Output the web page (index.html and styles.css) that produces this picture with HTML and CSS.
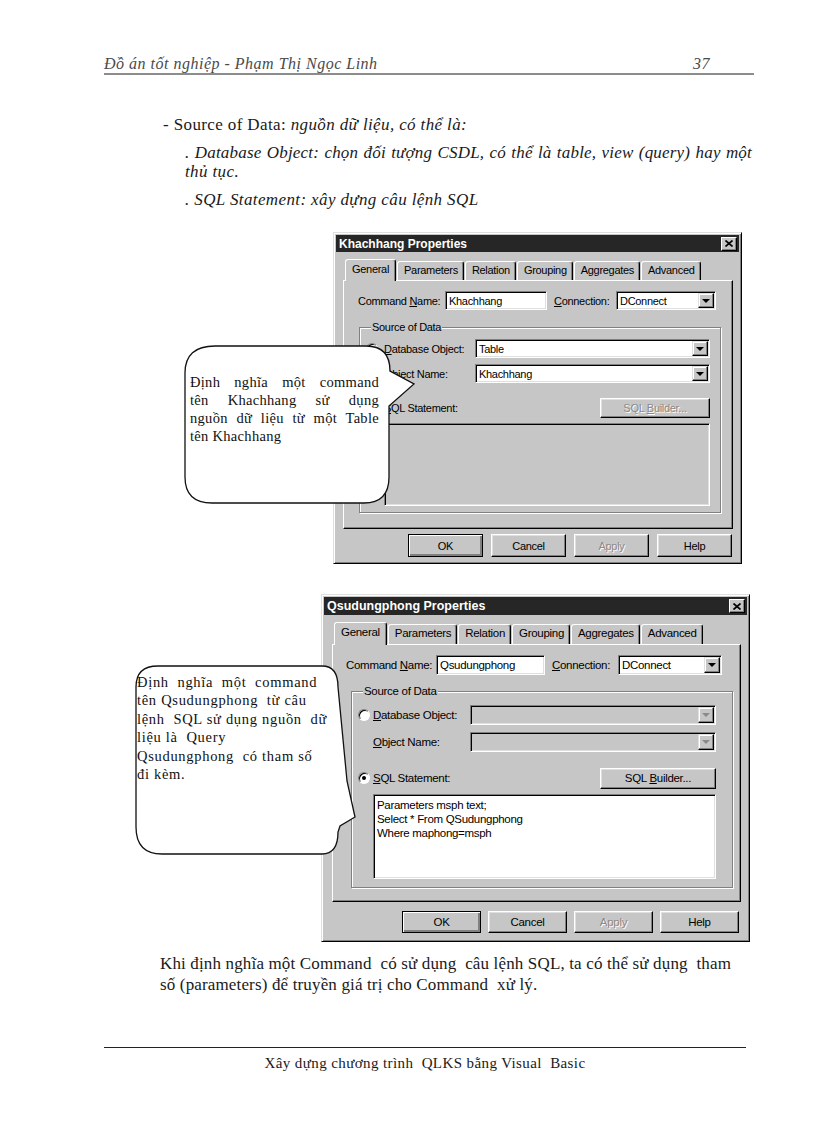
FILE: index.html
```html
<!DOCTYPE html>
<html lang="vi">
<head>
    <meta charset="UTF-8">
    <title>Đồ án tốt nghiệp - trang 37</title>
    <link rel="stylesheet" href="styles.css">
</head>
<body>
<div class="page">
    <div class="header">
        <span>Đồ án tốt nghiệp - Phạm Thị Ngọc Linh</span>
        <span class="page-no">37</span>
    </div>

    <div class="intro">
        <p>- Source of Data: <i>nguồn dữ liệu, có thể là:</i></p>
        <p class="item"><i class="jl">. Database Object: chọn đối tượng CSDL, có thể là table, view (query) hay một</i><i>thủ tục.</i></p>
        <p class="item"><i>. SQL Statement: xây dựng câu lệnh SQL</i></p>
    </div>

    <!-- hình 1: command lấy dữ liệu từ table -->
    <div class="figure fig-kh">
        <div class="win win-kh">
            <div class="titlebar">
                <span>Khachhang Properties</span>
                <span class="close"><svg width="8" height="7" viewBox="0 0 8 7"><path d="M0.5 0.5L7.5 6.5M7.5 0.5L0.5 6.5" stroke="#000" stroke-width="1.7"/></svg></span>
            </div>
            <div class="tabs">
                <span class="tab active">General</span>
                <span class="tab">Parameters</span>
                <span class="tab">Relation</span>
                <span class="tab">Grouping</span>
                <span class="tab">Aggregates</span>
                <span class="tab">Advanced</span>
            </div>
            <div class="panel">
                <div class="row">
                    <span class="lbl lbl-cmd">Command <u>N</u>ame:</span>
                    <span class="field input-cmd">Khachhang</span>
                    <span class="lbl lbl-conn"><u>C</u>onnection:</span>
                    <span class="field combo combo-conn"><span class="val">DConnect</span><span class="drop"></span></span>
                </div>
                <fieldset class="group">
                    <legend>Source of Data</legend>
                    <div class="row">
                        <span class="radio checked"></span>
                        <span class="lbl lbl-src"><u>D</u>atabase Object:</span>
                        <span class="field combo"><span class="val">Table</span><span class="drop"></span></span>
                    </div>
                    <div class="row row-obj">
                        <span class="lbl lbl-src"><u>O</u>bject Name:</span>
                        <span class="field combo"><span class="val">Khachhang</span><span class="drop"></span></span>
                    </div>
                    <div class="row row-sql">
                        <span class="radio"></span>
                        <span class="lbl"><u>S</u>QL Statement:</span>
                        <span class="btn btn-sql disabled"><span>SQL <u>B</u>uilder...</span></span>
                    </div>
                    <div class="field sql-text disabled"></div>
                </fieldset>
            </div>
            <div class="buttons">
                <span class="btn default">OK</span>
                <span class="btn">Cancel</span>
                <span class="btn disabled">Apply</span>
                <span class="btn">Help</span>
            </div>
        </div>

        <div class="callout callout-kh">
            <svg class="bubble" width="232" height="161" viewBox="0 0 232 161">
                <path d="M31 1H182Q206 1 206 26L230 39L205 61V132Q205 158 180 158H28Q1 158 1 132V28Q1 1 31 1Z" fill="#fff" stroke="#111" stroke-width="1.3"/>
            </svg>
            <div class="callout-text">
                <span class="jl">Định nghĩa một command</span>
                <span class="jl">tên Khachhang sử dụng</span>
                <span class="jl">nguồn dữ liệu từ một Table</span>
                <span>tên Khachhang</span>
            </div>
        </div>
    </div>

    <!-- hình 2: command dùng câu lệnh SQL có tham số -->
    <div class="figure fig-qs">
        <div class="win win-qs">
            <div class="titlebar">
                <span>Qsudungphong Properties</span>
                <span class="close"><svg width="8" height="7" viewBox="0 0 8 7"><path d="M0.5 0.5L7.5 6.5M7.5 0.5L0.5 6.5" stroke="#000" stroke-width="1.7"/></svg></span>
            </div>
            <div class="tabs">
                <span class="tab active">General</span>
                <span class="tab">Parameters</span>
                <span class="tab">Relation</span>
                <span class="tab">Grouping</span>
                <span class="tab">Aggregates</span>
                <span class="tab">Advanced</span>
            </div>
            <div class="panel">
                <div class="row">
                    <span class="lbl lbl-cmd">Command <u>N</u>ame:</span>
                    <span class="field input-cmd">Qsudungphong</span>
                    <span class="lbl lbl-conn"><u>C</u>onnection:</span>
                    <span class="field combo combo-conn"><span class="val">DConnect</span><span class="drop"></span></span>
                </div>
                <fieldset class="group">
                    <legend>Source of Data</legend>
                    <div class="row">
                        <span class="radio"></span>
                        <span class="lbl lbl-src"><u>D</u>atabase Object:</span>
                        <span class="field combo disabled"><span class="val"></span><span class="drop"></span></span>
                    </div>
                    <div class="row row-obj">
                        <span class="lbl lbl-src"><u>O</u>bject Name:</span>
                        <span class="field combo disabled"><span class="val"></span><span class="drop"></span></span>
                    </div>
                    <div class="row row-sql">
                        <span class="radio checked"></span>
                        <span class="lbl"><u>S</u>QL Statement:</span>
                        <span class="btn btn-sql"><span>SQL <u>B</u>uilder...</span></span>
                    </div>
                    <div class="field sql-text">Parameters msph text;<br>Select * From QSudungphong<br>Where maphong=msph</div>
                </fieldset>
            </div>
            <div class="buttons">
                <span class="btn default">OK</span>
                <span class="btn">Cancel</span>
                <span class="btn disabled">Apply</span>
                <span class="btn">Help</span>
            </div>
        </div>

        <div class="callout callout-qs">
            <svg class="bubble" width="224" height="192" viewBox="0 0 224 192">
                <path d="M24 2H188Q204 2 204 23L213 117L221 153L206 162L204 168Q204 190 188 190H28Q2 190 2 163V23Q2 2 24 2Z" fill="#fff" stroke="#111" stroke-width="1.3"/>
            </svg>
            <div class="callout-text">
                <span>Định  nghĩa  một  command</span>
                <span>tên Qsudungphong  từ câu</span>
                <span>lệnh  SQL sử dụng nguồn  dữ</span>
                <span>liệu là  Query</span>
                <span>Qsudungphong  có tham số</span>
                <span>đi kèm.</span>
            </div>
        </div>
    </div>

    <p class="note">Khi định nghĩa một Command  có sử dụng  câu lệnh SQL, ta có thể sử dụng  tham số (parameters) để truyền giá trị cho Command  xử lý.</p>

    <div class="footer">Xây dựng chương trình  QLKS bằng Visual  Basic</div>
</div>
</body>
</html>
```

FILE: styles.css
```css
body {
    margin: 0;
    background-color: #fff;
    font-family: "Liberation Serif", "Times New Roman", serif;
    color: #1a1a1a;
}

.page {
    width: 816px;
    height: 1123px;
    display: flex;
    flex-direction: column;
}

/* header / footer of the printed page */
.header {
    display: flex;
    justify-content: space-between;
    margin: 55px 62px 0 104px;
    padding-bottom: 1px;
    border-bottom: 2px solid #8c8c8c;
    font-style: italic;
    font-size: 16px;
    line-height: 17px;
    letter-spacing: 0.5px;
    color: #4a4a4a;
}
.page-no {
    margin-right: 44px;
}

.footer {
    margin: auto 70px 51px 104px;
    padding-top: 6px;
    border-top: 1px solid #222;
    text-align: center;
    font-size: 15px;
    line-height: 18px;
    letter-spacing: 0.4px;
    white-space: pre;
}

.intro {
    margin: 40px 0 0 163px;
    font-size: 17px;
    line-height: 19px;
    letter-spacing: 0.38px;
}
.intro p {
    margin: 0 0 9px;
}
.intro .item {
    display: flex;
    flex-direction: column;
    margin-left: 22px;
    width: 567px;
}
.intro .item .jl {
    letter-spacing: 0.2px;
}

.note {
    margin: 11px 0 0 160px;
    width: 580px;
    font-size: 17px;
    line-height: 21px;
    letter-spacing: 0.15px;
    white-space: pre-wrap;
}

.figure {
    position: relative;
}
.fig-kh {
    margin-top: 14px;
}
.fig-qs {
    margin-top: 30px;
}

/* ---------- windows 95 property dialog ---------- */
.win {
    box-sizing: border-box;
    width: var(--w);
    height: var(--h);
    padding: 2px;
    display: flex;
    flex-direction: column;
    background-color: #c6c6c6;
    border: 1px solid;
    border-color: #dfdfdf #000 #000 #dfdfdf;
    box-shadow: inset 1px 1px #fff, inset -1px -1px #808080;
    font-family: "Liberation Sans", Arial, sans-serif;
    font-size: var(--fs);
    letter-spacing: -0.3px;
    color: #000;
}
.win u {
    text-decoration-thickness: 1px;
    text-underline-offset: 1px;
}

.win-kh {
    margin-left: 333px;
    --w: 409px; --h: 332px; --fs: 11px; --title-fs: 12px;
    --title-h: 17px; --tabs-mt: 7px; --tab-h: 19px;
    --panel-ml: 7px; --panel-mr: 6px; --panel-h: 249px; --panel-pt: 10px; --panel-pl: 14px;
    --field-h: 19px; --lbl-cmd: 87px; --input-w: 102px; --lbl-conn: 62px; --conn-w: 100px;
    --grp-mt: 11px; --grp-ml: 1px; --grp-mr: 11px; --grp-pt: 5px; --grp-pl: 6px; --grp-pr: 10px; --grp-pb: 6px;
    --radio-gap: 6px; --lbl-src: 91px; --row-gap: 6px; --sql-gap: 15px; --sqlb-w: 110px;
    --ta-gap: 6px; --ta-h: 83px;
    --btn-mt: 5px; --btn-mr: 7px; --btn-w: 75px; --btn-h: 23px; --btn-gap: 8px;
}
.win-qs {
    margin-left: 321px;
    --w: 429px; --h: 348px; --fs: 11.5px; --title-fs: 12.5px;
    --title-h: 18px; --tabs-mt: 7px; --tab-h: 20px;
    --panel-ml: 8px; --panel-mr: 6px; --panel-h: 258px; --panel-pt: 10px; --panel-pl: 13px;
    --field-h: 20px; --lbl-cmd: 90px; --input-w: 109px; --lbl-conn: 66px; --conn-w: 104px;
    --grp-mt: 10px; --grp-ml: 5px; --grp-mr: 7px; --grp-pt: 7px; --grp-pl: 6px; --grp-pr: 16px; --grp-pb: 8px;
    --radio-gap: 3px; --lbl-src: 97px; --row-gap: 7px; --sql-gap: 16px; --sqlb-w: 116px;
    --ta-gap: 6px; --ta-h: 85px;
    --btn-mt: 9px; --btn-mr: 8px; --btn-w: 79px; --btn-h: 22px; --btn-gap: 7px;
}

.titlebar {
    height: var(--title-h);
    display: flex;
    align-items: center;
    justify-content: space-between;
    padding: 0 2px 0 3px;
    background-color: #262626;
    color: #fff;
    font-weight: bold;
    font-size: var(--title-fs);
    letter-spacing: 0;
}
.close {
    box-sizing: border-box;
    width: 16px;
    height: 14px;
    display: flex;
    align-items: center;
    justify-content: center;
    background-color: #c6c6c6;
    border: 1px solid;
    border-color: #fff #000 #000 #fff;
    box-shadow: inset -1px -1px #808080;
}

.tabs {
    display: flex;
    align-items: flex-end;
    height: calc(var(--tab-h) + 2px);
    margin: var(--tabs-mt) 0 0 var(--panel-ml);
    padding-left: 2px;
}
.tab {
    box-sizing: border-box;
    height: var(--tab-h);
    padding: 2px 5px 0 6px;
    margin-right: 1px;
    border: 1px solid;
    border-bottom: none;
    border-color: #fff #000 #000 #fff;
    border-radius: 3px 3px 0 0;
    box-shadow: inset -1px 0 #808080;
}
.tab.active {
    position: relative;
    z-index: 1;
    height: calc(var(--tab-h) + 3px);
    margin-bottom: -1px;
    padding: 3px 6px 0 6px;
    background-color: #c6c6c6;
}

.panel {
    box-sizing: border-box;
    height: var(--panel-h);
    margin: 0 var(--panel-mr) 0 var(--panel-ml);
    padding: var(--panel-pt) 0 0 var(--panel-pl);
    border: 1px solid;
    border-color: #fff #000 #000 #fff;
    box-shadow: inset -1px -1px #808080;
}

.row {
    display: flex;
    align-items: center;
    height: var(--field-h);
}
.lbl {
    white-space: nowrap;
}
.lbl-cmd {
    width: var(--lbl-cmd);
}
.lbl-conn {
    width: var(--lbl-conn);
    margin-left: 7px;
}
.lbl-src {
    width: var(--lbl-src);
}

.field {
    box-sizing: border-box;
    height: var(--field-h);
    display: flex;
    align-items: center;
    padding-left: 3px;
    background-color: #fff;
    border: 1px solid;
    border-color: #808080 #fff #fff #808080;
    box-shadow: inset 1px 1px #000, inset -1px -1px #dfdfdf;
    white-space: nowrap;
}
.field.disabled {
    background-color: #c6c6c6;
}
.input-cmd {
    width: var(--input-w);
}
.combo {
    flex: 1;
    padding-right: 0;
}
.combo-conn {
    flex: none;
    width: var(--conn-w);
}
.combo .val {
    flex: 1;
}
.drop {
    box-sizing: border-box;
    align-self: stretch;
    width: 16px;
    margin: 1px;
    display: flex;
    align-items: center;
    justify-content: center;
    background-color: #c6c6c6;
    border: 1px solid;
    border-color: #dfdfdf #000 #000 #dfdfdf;
    box-shadow: inset -1px -1px #808080, inset 1px 1px #fff;
}
.drop::after {
    content: "";
    border-left: 4px solid transparent;
    border-right: 4px solid transparent;
    border-top: 4px solid #000;
}
.disabled .drop::after {
    border-top-color: #8a8a8a;
}

.group {
    margin: var(--grp-mt) var(--grp-mr) 0 var(--grp-ml);
    padding: var(--grp-pt) var(--grp-pr) var(--grp-pb) var(--grp-pl);
    min-width: 0;
    border: 1px solid #808080;
    box-shadow: inset 1px 1px #fff, 1px 1px #fff;
}
.group legend {
    margin-left: 5px;
    padding: 0 1px;
    line-height: 13px;
    background-color: #c6c6c6;
}
.row-obj {
    margin-top: var(--row-gap);
    padding-left: calc(12px + var(--radio-gap));
}
.row-sql {
    margin-top: var(--sql-gap);
}

.radio {
    box-sizing: border-box;
    width: 12px;
    height: 12px;
    margin-right: var(--radio-gap);
    display: flex;
    align-items: center;
    justify-content: center;
    border-radius: 50%;
    background-color: #fff;
    border: 1px solid;
    border-color: #808080 #fff #fff #808080;
    box-shadow: inset 1px 1px #000;
}
.radio.checked::after {
    content: "";
    width: 4px;
    height: 4px;
    border-radius: 50%;
    background-color: #000;
}

.sql-text {
    display: block;
    height: var(--ta-h);
    margin: var(--ta-gap) 0 0 calc(12px + var(--radio-gap));
    padding: 3px 3px;
    line-height: 14px;
}

.btn {
    box-sizing: border-box;
    width: var(--btn-w);
    height: var(--btn-h);
    display: flex;
    align-items: center;
    justify-content: center;
    background-color: #c6c6c6;
    border: 1px solid;
    border-color: #fff #000 #000 #fff;
    box-shadow: inset -1px -1px #808080, inset 1px 1px #dfdfdf;
}
.btn.default {
    border-color: #000;
    box-shadow: inset 1px 1px #fff, inset -2px -2px #808080;
}
.btn.disabled {
    color: #8a8a8a;
    text-shadow: 1px 1px #fff;
}
.btn-sql {
    width: var(--sqlb-w);
    height: calc(var(--field-h) + 1px);
    margin-left: auto;
}
.buttons {
    display: flex;
    justify-content: flex-end;
    gap: var(--btn-gap);
    margin: var(--btn-mt) var(--btn-mr) 0 0;
}

/* ---------- speech bubbles over the dialogs ---------- */
.callout {
    position: absolute;
    z-index: 2;
    box-sizing: border-box;
}
.bubble {
    position: absolute;
    left: 0;
    top: 0;
}
.callout-text {
    position: relative;
    display: flex;
    flex-direction: column;
    color: #111;
}
.callout-kh {
    left: 184px;
    top: 113px;
    width: 232px;
    height: 161px;
    padding: 28px 37px 0 6px;
}
.callout-kh .callout-text {
    font-size: 14.5px;
    line-height: 18px;
    letter-spacing: 0.3px;
}
.jl {
    text-align: justify;
    text-align-last: justify;
}
.callout-qs {
    left: 134px;
    top: 70px;
    width: 224px;
    height: 192px;
    padding: 9px 0 0 3px;
}
.callout-qs .callout-text {
    font-size: 14.5px;
    line-height: 18.4px;
    letter-spacing: 0.7px;
    white-space: pre;
}
```
